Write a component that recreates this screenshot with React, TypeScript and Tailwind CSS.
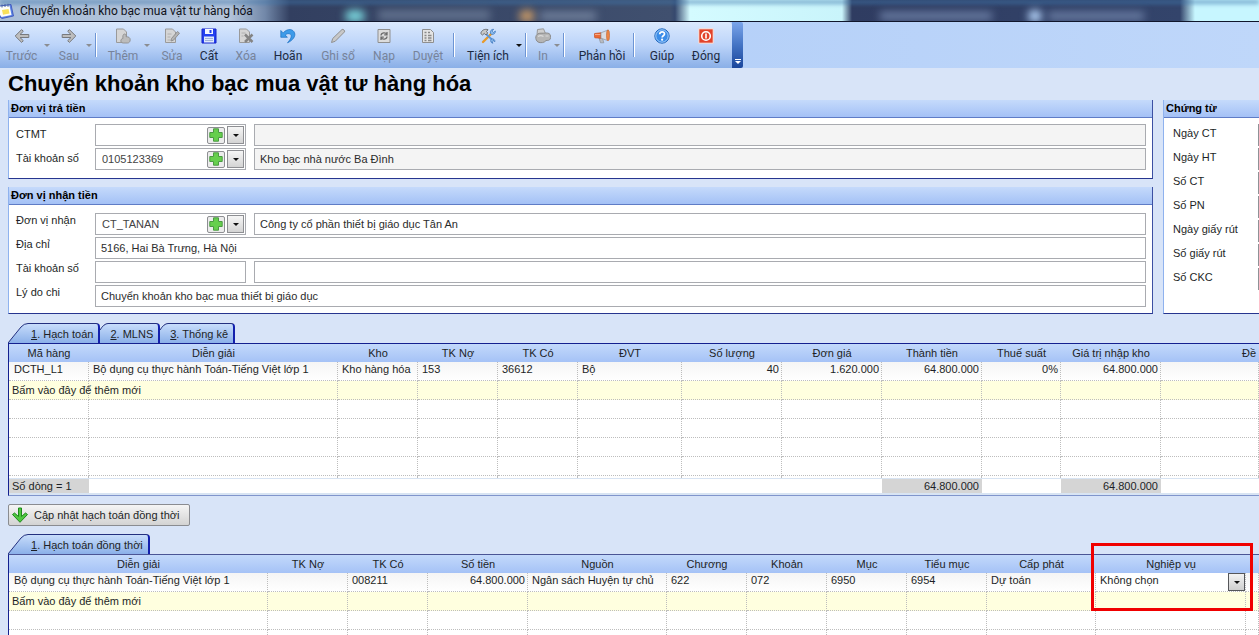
import type { ReactNode } from "react";
import { clsx } from "clsx";

interface Tool {
  label?: string;
  icon?: ReactNode;
  width?: string;
  enabled?: boolean;
  caret?: boolean;
  separator?: boolean;
}

interface Column {
  title: string;
  width: string;
  value?: string;
  align?: "right";
  total?: string;
}

const GRAY = "#8b8d91";

const page = <path d="M1.500 1h7l3 3v10.500h-10z" fill="#d5d5d5" stroke="#9a9a9a" />;

const icons = {
  back: (
    <path d="M7.6 1.6 1.2 8l6.4 6.4 1.7-1.7-3.3-3.2h8.8v-3H6l3.3-3.2z" fill="#bdbdbd" stroke="#77797d" strokeLinejoin="round" />
  ),
  forward: (
    <path d="M8.4 1.6 14.8 8l-6.4 6.4-1.7-1.7L10 9.500H1.200v-3H10L6.700 3.300z" fill="#bdbdbd" stroke="#77797d" strokeLinejoin="round" />
  ),
  add: (
    <>
      {page}
      <path d="M9.500 6c1.800 0 1.800 1.700 1.600 2.700 2.400 0 4.100.8 4.100 3.100 0 2-1.200 3.200-2.700 3.200H8.200c-2 0-2.700-1.500-2.200-3 .4-1.200 1.400-1.500 2-1.500-.5-2 0-4.500 1.500-4.500z" fill="#bcbcbc" stroke="#8f8f8f" strokeWidth=".9" />
    </>
  ),
  edit: (
    <>
      {page}
      <path d="M3.500 6h4M3.500 9h3M3.500 12h3" stroke="#b0b0b0" />
      <path d="m7.500 10.500 6-7 2 1.700-6 7-2.500.8z" fill="#b4b4b4" stroke="#8a8a8a" strokeWidth=".9" />
    </>
  ),
  save: (
    <>
      <path d="M1 1h14v14H1z" fill="#2340f0" stroke="#1722c9" />
      <path d="M4 1h8v5H4z" fill="#f4f7ff" />
      <path d="M8.500 2h2v3h-2z" fill="#2340f0" />
      <path d="M3 8.500h10V14.500H3z" fill="#dfe8fb" />
      <path d="M4 10.500h8M4 12.500h8" stroke="#9fb2d8" />
    </>
  ),
  remove: (
    <>
      {page}
      <path d="M3.500 5h4M3.500 8h2" stroke="#b0b0b0" />
      <path d="m7 6.500 7.500 7.500m0-7.500L7 14" stroke="#848484" strokeWidth="2.500" />
    </>
  ),
  undo: (
    <path d="M.8 2.500v6.800h6.600L5.200 7c1.500-1.300 3.500-1.800 5-.9 1.800 1.200 1.400 4.200-2.700 8.700 5.800-2.700 8.200-6.700 7.100-9.800C13.400 1 7.700-.2 3.200 4.900z" fill="#3d9be9" stroke="#1b6fc2" strokeWidth=".7" />
  ),
  pencil: <path d="m1.500 14.500 1.200-4L12 1.500c1-.8 3.300 1.200 2.500 2.400l-9.300 9.400z" fill="#c8c8c8" stroke="#909090" />,
  reload: (
    <>
      <path d="M2 1.500h12v13H2z" fill="#dcdcdc" stroke="#8f8f8f" />
      <path d="M5 7.500c.2-3 4.500-3.500 5.800-1.200M11 4v2.800H8.200M11 8.500c-.2 3-4.500 3.500-5.800 1.200M5 12V9.200h2.800" fill="none" stroke="#6d6d6d" strokeWidth="1.300" />
    </>
  ),
  approve: (
    <>
      <path d="M2.500 1.500h8l3 3v10h-11z" fill="#e4e4e4" stroke="#8f8f8f" />
      <path d="M4.500 4.500h2m1.500 0h2m-5.500 3h2m1.500 0h3.500m-7 2.500h2m1.500 0h3.500m-7 2.500h2m1.500 0h3.500" stroke="#888" strokeWidth="1.400" />
    </>
  ),
  utility: (
    <>
      <path d="m3 14 8.500-8.500" stroke="#e79a2c" strokeWidth="2.400" strokeLinecap="round" />
      <path d="m6.500 6.500 6.500 6" stroke="#5d97da" strokeWidth="1.800" strokeLinecap="round" />
      <path d="M10.500 5.500c-.8-2.500 1-4.500 3.200-4.200l-1.600 1.800 1.300 1.400 2-1.500c.2 2.200-1.700 4-4 3.200z" fill="#8dbdf0" stroke="#3872b8" strokeWidth=".7" />
      <path d="M.8 5.500C1.500 2.200 4.500.6 8 1.700L6.500 3.500 7.700 5 5.800 7 4.300 5.400 2.500 7z" fill="#c9c9c9" stroke="#55585d" strokeWidth=".8" />
      <path d="M11 11.200c2.400-1 4.200.6 3.900 2.500l-1.700-1.200-1.200 1.200 1 1.500c-1.800 0-2.900-1.800-2-4z" fill="#8dbdf0" stroke="#3872b8" strokeWidth=".7" />
    </>
  ),
  print: (
    <>
      <path d="M2 6.500 2.500 1.500l6-.7L10.500 5.500z" fill="#cfcfcf" stroke="#999" />
      <path d="M.8 9C1 6.500 3.500 5 6 5.200c3 .2 6-.7 8 .3 1.800 1 2 3.500 1.200 5.500-.6 1.500-2.700 1.500-4.200 1.500-1.500 2.300-5.500 2.800-8 1.500C1.300 13 .7 11 .8 9z" fill="#b5b5b5" stroke="#8c8c8c" />
      <path d="M3 8.500c1.500-1 4-1 5.500 0M10.500 8h3" stroke="#dadada" strokeWidth="1.200" />
    </>
  ),
  horn: (
    <>
      <path d="m5 10 1.500 4.800h3.300L8.500 10z" fill="#b9bcc2" stroke="#85888d" strokeWidth=".6" />
      <path d="M.6 5.500Q.2 7.500.8 9.800l6.200.4V4.800z" fill="#ea6a35" stroke="#c84a1a" strokeWidth=".7" />
      <path d="M1 6.500h5.500" stroke="#f7a987" />
      <path d="M7 4.800l6.500-2.600v10.300L7 10.200z" fill="#d9dde4" stroke="#8d929b" strokeWidth=".7" />
      <ellipse cx="14" cy="7.300" rx="1.500" ry="5.500" fill="#f08745" stroke="#b9622f" strokeWidth=".6" />
    </>
  ),
  help: (
    <>
      <circle cx="8" cy="8" r="7.200" fill="#3b8de8" stroke="#2469bd" />
      <circle cx="8" cy="8" r="6.200" fill="none" stroke="#b9dafc" strokeWidth=".8" />
      <path d="M5.700 6.200c0-3.200 4.900-3 4.800-.2-.1 1.700-2.300 1.800-2.400 3.500" fill="none" stroke="#fff" strokeWidth="1.700" />
      <circle cx="8.100" cy="11.700" r="1.100" fill="#fff" />
    </>
  ),
  close: (
    <>
      <path d="M.8.800h14.400v14.400H.8z" fill="#e2432a" stroke="#f9e6e0" />
      <circle cx="8" cy="8" r="4.300" fill="none" stroke="#fff" strokeWidth="1.600" />
      <path d="M8 5.500v5" stroke="#fff" strokeWidth="1.600" />
    </>
  ),
};

const TOOLS: Tool[] = [
  { label: "Trước", icon: icons.back, width: "w-[43px]", caret: true },
  { label: "Sau", icon: icons.forward, width: "w-8", caret: true },
  { separator: true },
  { label: "Thêm", icon: icons.add, width: "w-10", caret: true },
  { label: "Sửa", icon: icons.edit, width: "w-[38px]" },
  { label: "Cất", icon: icons.save, width: "w-9", enabled: true },
  { label: "Xóa", icon: icons.remove, width: "w-[38px]" },
  { label: "Hoãn", icon: icons.undo, width: "w-[46px]", enabled: true },
  { label: "Ghi sổ", icon: icons.pencil, width: "w-[54px]" },
  { label: "Nạp", icon: icons.reload, width: "w-[38px]" },
  { label: "Duyệt", icon: icons.approve, width: "w-[50px]" },
  { separator: true },
  { label: "Tiện ích", icon: icons.utility, width: "w-[54px]", enabled: true, caret: true },
  { separator: true },
  { label: "In", icon: icons.print, width: "w-5", caret: true },
  { separator: true },
  { label: "Phản hồi", icon: icons.horn, width: "w-[62px]", enabled: true },
  { separator: true },
  { label: "Giúp", icon: icons.help, width: "w-[42px]", enabled: true },
  { label: "Đóng", icon: icons.close, width: "w-[46px]", enabled: true },
];

const ITEM_COLUMNS: Column[] = [
  { title: "Mã hàng", width: "w-20", value: "DCTH_L1", total: "Số dòng = 1" },
  { title: "Diễn giải", width: "w-[249px]", value: "Bộ dụng cụ thực hành Toán-Tiếng Việt lớp 1" },
  { title: "Kho", width: "w-20", value: "Kho hàng hóa" },
  { title: "TK Nợ", width: "w-20", value: "153" },
  { title: "TK Có", width: "w-20", value: "36612" },
  { title: "ĐVT", width: "w-[104px]", value: "Bộ" },
  { title: "Số lượng", width: "w-[100px]", value: "40", align: "right" },
  { title: "Đơn giá", width: "w-[100px]", value: "1.620.000", align: "right" },
  { title: "Thành tiền", width: "w-[100px]", value: "64.800.000", align: "right", total: "64.800.000" },
  { title: "Thuế suất", width: "w-[79px]", value: "0%", align: "right" },
  { title: "Giá trị nhập kho", width: "w-[100px]", value: "64.800.000", align: "right", total: "64.800.000" },
  { title: "Đề", width: "w-auto" },
];

const ENTRY_COLUMNS: Column[] = [
  { title: "Diễn giải", width: "w-[259px]", value: "Bộ dụng cụ thực hành Toán-Tiếng Việt lớp 1" },
  { title: "TK Nợ", width: "w-20" },
  { title: "TK Có", width: "w-20", value: "008211" },
  { title: "Số tiền", width: "w-[100px]", value: "64.800.000", align: "right" },
  { title: "Nguồn", width: "w-[139px]", value: "Ngân sách Huyện tự chủ" },
  { title: "Chương", width: "w-20", value: "622" },
  { title: "Khoản", width: "w-20", value: "072" },
  { title: "Mục", width: "w-20", value: "6950" },
  { title: "Tiểu mục", width: "w-20", value: "6954" },
  { title: "Cấp phát", width: "w-[109px]", value: "Dự toán" },
  { title: "Nghiệp vụ", width: "w-[150px]", value: "Không chọn" },
  { title: "", width: "w-auto" },
];

const VOUCHER_FIELDS = ["Ngày CT", "Ngày HT", "Số CT", "Số PN", "Ngày giấy rút", "Số giấy rút", "Số CKC"];

function Caret({ color = "#111" }: { color?: string }) {
  return (
    <svg viewBox="0 0 6 3" className="h-[3px] w-1.5" aria-hidden="true">
      <path d="M0 0h6L3 3z" fill={color} />
    </svg>
  );
}

function TitleBar() {
  return (
    <header className="relative flex h-[22px] shrink-0 items-center overflow-hidden border-b border-[#10162c] bg-[linear-gradient(90deg,#a9bed8_0px,#b4c4da_230px,#7288a9_265px,#323f60_290px,#40506f_670px,#36496e_675px,#d4fbff_690px,#c9f4fb_842px,#2f3c61_852px,#33446b_1180px,#c7f6ff_1195px,#c7f6ff_100%)]">
      <div className="absolute inset-x-0 top-0 h-1 bg-[#3f78ae]/60 blur-[2px]" />
      <div className="absolute top-2.5 left-[345px] h-3 w-5 rounded-full bg-[#79d5dc] blur-xs" />
      <div className="absolute top-2.5 left-[378px] h-2.5 w-28 bg-[#63738f] blur-xs" />
      <div className="absolute top-2.5 left-[519px] h-3 w-4 rounded-full bg-[#c99a66] blur-xs" />
      <div className="absolute top-3 left-[540px] h-2 w-14 bg-[#7585a0] blur-xs" />
      <div className="absolute top-3 left-[880px] h-2 w-28 bg-[#6d80a6] blur-xs" />
      <div className="absolute top-2.5 left-[1028px] h-3 w-3.5 rounded-full bg-[#b9d9ff] blur-xs" />
      <div className="absolute top-3 left-[1048px] h-2 w-24 bg-[#6d80a6] blur-xs" />
      <svg viewBox="0 0 14 16" className="relative h-4 w-3.5" aria-hidden="true">
        <path d="m0 3 11-1.500L13.500 13 2 15.500.0 14z" fill="#5a83e6" stroke="#3a4fb5" strokeWidth=".8" />
        <path d="m0 3.500 9.500-1L11.500 12 1.500 14 0 12z" fill="#fdfdf8" />
        <path d="m2 7 6.500-1 1 4.500L3 11.800z" fill="#f8e05a" />
        <path d="M2 1.500v3M5 1v3M8 .8v3" stroke="#48639c" />
      </svg>
      <h2 className="relative ml-1.5 font-[Roboto,sans-serif] text-xs text-[#10131b]">
        Chuyển khoản kho bạc mua vật tư hàng hóa
      </h2>
    </header>
  );
}

function Toolbar() {
  return (
    <div className="flex h-[46px] shrink-0 bg-linear-to-r from-[#a9c8f6] to-[#bfd7fa] font-[Roboto,sans-serif] text-xs">
      <div className="flex rounded-tr bg-linear-to-b from-[#dbe9fd] via-[#bcd4f9] to-[#8aafe7] pr-[3px]">
        {TOOLS.map((t, i) =>
          t.separator ? (
            <div key={i} className="flex w-2 items-center">
              <div className="h-6 w-0.5 border-l border-[#6d95d4] bg-white" />
            </div>
          ) : (
            <div key={i} className="flex">
              <button
                type="button"
                className={clsx(
                  "flex flex-col items-center gap-0.5 pt-1.5 whitespace-nowrap",
                  t.width,
                  t.enabled ? "text-[#1c2a42]" : "text-[#77839a]"
                )}
              >
                <svg viewBox="0 0 16 16" className="size-4 shrink-0" fill="none" aria-hidden="true">
                  {t.icon}
                </svg>
                <span className="leading-5">{t.label}</span>
              </button>
              {t.caret && (
                <button type="button" aria-label={`${t.label} tùy chọn`} className="flex w-2.5 items-center pl-px">
                  <Caret color={t.enabled ? "#111" : GRAY} />
                </button>
              )}
            </div>
          )
        )}
      </div>
      <button
        type="button"
        aria-label="Thêm nút"
        className="flex w-[11px] flex-col items-center justify-end gap-px rounded-r-xs bg-linear-to-b from-[#7ba5ea] via-[#4474c4] to-[#1a469c] pb-1"
      >
        <span className="h-px w-1.5 bg-white" />
        <Caret color="#fff" />
      </button>
    </div>
  );
}

function Group({ title, open, children }: { title: string; open?: boolean; children: ReactNode }) {
  return (
    <section
      className={clsx(
        "flex flex-col overflow-hidden border-b border-l border-b-[#27358f] border-l-[#8fb2ee] bg-white",
        !open && "border-r border-r-[#3c50a3]"
      )}
    >
      <h3 className="h-[18px] shrink-0 border-b border-[#5f7cc6] bg-linear-to-b from-[#c5dafb] to-[#a4c1f6] pl-0.5 text-[11px] leading-4 font-bold text-black">
        {title}
      </h3>
      {children}
    </section>
  );
}

function Field({ id, label, top, children }: { id: string; label: string; top?: boolean; children: ReactNode }) {
  return (
    <div className={clsx("flex", top ? "items-start" : "items-center")}>
      <label htmlFor={id} className={clsx("w-[79px] shrink-0 leading-[14px]", !top && "pb-0.5")}>
        {label}
      </label>
      <div className="flex min-w-0 flex-1 gap-2">{children}</div>
    </div>
  );
}

function TextBox({ id, label, value, readOnly, narrow }: { id?: string; label?: string; value?: string; readOnly?: boolean; narrow?: boolean }) {
  return (
    <input
      id={id}
      aria-label={label}
      defaultValue={value}
      readOnly={readOnly}
      className={clsx(
        "h-[22px] border border-[#a9abb0] px-[5px] text-[#2b2b2b]",
        narrow ? "w-[151px] shrink-0" : "min-w-0 flex-1",
        readOnly ? "bg-[#f4f4f4]" : "bg-white"
      )}
    />
  );
}

function DropButton({ label }: { label: string }) {
  return (
    <button
      type="button"
      aria-label={label}
      className="flex h-[18px] w-[17px] shrink-0 items-center justify-center border border-[#8e8f93] bg-linear-to-b from-[#f6f6f6] to-[#d4d4d4]"
    >
      <Caret />
    </button>
  );
}

function Combo({ id, value }: { id: string; value?: string }) {
  return (
    <div className="flex h-[22px] w-[151px] shrink-0 items-center gap-0.5 border border-[#a9abb0] bg-white pr-px">
      <input id={id} defaultValue={value} className="h-full min-w-0 flex-1 bg-transparent pl-1.5 text-[#444]" />
      <button
        type="button"
        aria-label="Thêm mới"
        className="flex h-[17px] w-[18px] shrink-0 items-center justify-center rounded-xs border border-[#8e8f93] bg-[#ececec]"
      >
        <svg viewBox="0 0 14 14" className="size-3.5" aria-hidden="true">
          <path d="M4.500.8h5v3.700h3.700v5H9.500v3.700h-5V9.500H.8v-5h3.700z" fill="#66cf4d" stroke="#4a9a42" />
        </svg>
      </button>
      <DropButton label="Mở danh sách" />
    </div>
  );
}

function Tab({ index, label, first, active }: { index: number; label: string; first?: boolean; active?: boolean }) {
  return (
    <button type="button" role="tab" aria-selected={!!active} className="flex h-5">
      <svg viewBox={first ? "0 0 20 20" : "0 0 8 20"} className={clsx("h-5 shrink-0", first ? "w-5" : "w-2")} aria-hidden="true">
        <defs>
          <linearGradient id="tab-fill" x1="0" y1="0" x2="0" y2="1">
            <stop offset="0" stopColor="#c8ddfb" />
            <stop offset="1" stopColor="#8bb0e9" />
          </linearGradient>
        </defs>
        <path d={first ? "M0 20 13 4Q16 .5 20 .5V20z" : "M0 20V7Q4 .5 8 .5V20z"} fill="url(#tab-fill)" />
        <path d={first ? "M0 20 13 4Q16 .5 20 .5" : "M0 7Q4 .5 8 .5"} fill="none" stroke="#23307f" />
      </svg>
      <span
        className={clsx(
          "flex h-5 items-center rounded-tr-sm border-t border-r-2 border-t-[#23307f] border-r-[#1320ad] bg-linear-to-b from-[#c8ddfb] to-[#8bb0e9] pt-0.5 pr-[5px] whitespace-nowrap",
          first ? "pl-[3px]" : "pl-0.5"
        )}
      >
        <span className="underline">{index}</span>. {label}
      </span>
    </button>
  );
}

function Grid({ columns, blanks, totals, last }: { columns: Column[]; blanks: number; totals?: boolean; last?: ReactNode }) {
  const line = "border-r border-b border-dotted border-[#bdbdbd]";
  return (
    <table className="w-full table-fixed border-separate border-spacing-0 bg-white leading-[14px]">
      <thead>
        <tr className="bg-linear-to-b from-[#c3d9fb] to-[#a5c2f6]">
          {columns.map((c, i) => (
            <th
              key={i}
              className={clsx(
                "h-[18px] p-0 font-normal whitespace-nowrap",
                c.width,
                c.title === "Đề" ? "pr-[3px] text-right" : "text-center"
              )}
            >
              {c.title}
            </th>
          ))}
        </tr>
      </thead>
      <tbody>
        <tr className="bg-linear-to-b from-[#f5f5f5] to-white">
          {columns.map((c, i) => (
            <td
              key={i}
              className={clsx(
                line,
                "h-[19px] p-0 align-top whitespace-nowrap",
                c.align === "right" ? "pr-0.5 text-right" : i === 0 ? "pl-[5px]" : "pl-1"
              )}
            >
              {c.title === "Nghiệp vụ" ? last : c.value}
            </td>
          ))}
        </tr>
        <tr className="bg-[#ffffdf]">
          {columns.map((_, i) => (
            <td key={i} className={clsx(line, "h-[19px] p-0 pl-[3px] whitespace-nowrap")}>
              {i === 0 && "Bấm vào đây để thêm mới"}
            </td>
          ))}
        </tr>
        {Array.from({ length: blanks }, (_, r) => (
          <tr key={r}>
            {columns.map((_, i) => (
              <td key={i} className={clsx(line, "h-[19px] p-0")} />
            ))}
          </tr>
        ))}
        {totals && (
          <tr>
            {columns.map((_, i) => (
              <td key={i} className="h-0.5 border-r border-dotted border-[#bdbdbd] p-0" />
            ))}
          </tr>
        )}
      </tbody>
      {totals && (
        <tfoot>
          <tr>
            {columns.map((c, i) => (
              <td
                key={i}
                className={clsx(
                  "h-[17px] border-t border-b-2 border-[#d8e4f3] p-0 whitespace-nowrap",
                  c.total && "bg-[#d5d5d5]",
                  c.align === "right" ? "pr-[3px] text-right" : "pl-[3px]"
                )}
              >
                {c.total}
              </td>
            ))}
          </tr>
        </tfoot>
      )}
    </table>
  );
}

function OperationSelect() {
  return (
    <div className="relative -ml-1 flex h-[18px] items-center bg-white">
      <select
        aria-label="Nghiệp vụ"
        defaultValue="none"
        className="h-full w-full appearance-none bg-transparent pb-1 pl-1 leading-[14px]"
      >
        <option value="none">Không chọn</option>
      </select>
      <span className="pointer-events-none absolute top-0 right-0 flex h-[18px] w-[17px] items-center justify-center border border-[#55565a] bg-linear-to-b from-[#f3f3f3] to-[#cfcfcf]">
        <Caret />
      </span>
      {/* highlight frame around the column header and its first cells */}
      <div className="pointer-events-none absolute -top-[30px] -right-2 -bottom-5 -left-[5px] border-3 border-[#f00000]" />
    </div>
  );
}

export default function App() {
  return (
    <div className="flex h-screen flex-col overflow-hidden bg-[#d8e4f8] font-['Liberation_Sans',Arial,sans-serif] text-[11px] text-[#1d1f26]">
      <TitleBar />
      <Toolbar />
      <main className="flex min-h-0 flex-1 flex-col overflow-hidden pl-2">
        <h1 className="h-8 shrink-0 text-[22px] leading-8 font-bold text-black">Chuyển khoản kho bạc mua vật tư hàng hóa</h1>

        <div className="flex shrink-0 gap-2.5">
          <div className="flex min-w-0 flex-1 flex-col gap-2">
            <Group title="Đơn vị trả tiền">
              <div className="flex flex-col gap-0.5 pt-1.5 pr-1.5 pb-2 pl-[7px]">
                <Field id="ctmt" label="CTMT">
                  <Combo id="ctmt" />
                  <TextBox label="Tên CTMT" readOnly />
                </Field>
                <Field id="payer-account" label="Tài khoản số">
                  <Combo id="payer-account" value="0105123369" />
                  <TextBox label="Tên kho bạc" value="Kho bạc nhà nước Ba Đình" readOnly />
                </Field>
              </div>
            </Group>
            <Group title="Đơn vị nhận tiền">
              <div className="flex flex-col gap-0.5 pt-2 pr-1.5 pb-1.5 pl-[7px]">
                <Field id="receiver" label="Đơn vị nhận" top>
                  <Combo id="receiver" value="CT_TANAN" />
                  <TextBox label="Tên đơn vị nhận" value="Công ty cổ phần thiết bị giáo dục Tân An" />
                </Field>
                <Field id="address" label="Địa chỉ" top>
                  <TextBox id="address" value="5166, Hai Bà Trưng, Hà Nội" />
                </Field>
                <Field id="receiver-account" label="Tài khoản số" top>
                  <TextBox id="receiver-account" narrow />
                  <TextBox label="Tên ngân hàng" />
                </Field>
                <Field id="reason" label="Lý do chi" top>
                  <TextBox id="reason" value="Chuyển khoản kho bạc mua thiết bị giáo dục" />
                </Field>
              </div>
            </Group>
          </div>

          <div className="flex w-24 shrink-0 flex-col *:flex-1">
            <Group title="Chứng từ" open>
              <div className="flex flex-col gap-0.5 pt-1.5 pl-[9px]">
                {VOUCHER_FIELDS.map((label, i) => (
                  <div key={label} className="flex items-center">
                    <label htmlFor={`voucher-${i}`} className="w-[85px] shrink-0 pb-1 whitespace-nowrap">
                      {label}
                    </label>
                    <input id={`voucher-${i}`} className="h-[22px] w-28 shrink-0 border border-[#8f9196] bg-white" />
                  </div>
                ))}
              </div>
            </Group>
          </div>
        </div>

        <div role="tablist" className="mt-[9px] flex shrink-0">
          <Tab index={1} label="Hạch toán" first active />
          <Tab index={2} label="MLNS" />
          <Tab index={3} label="Thống kê" />
        </div>
        <div className="shrink-0 border-t border-b border-l border-[#14208f] border-b-[#8095cc]">
          <Grid columns={ITEM_COLUMNS} blanks={4} totals />
        </div>

        <button
          type="button"
          className="mt-2 flex h-[22px] w-[182px] shrink-0 items-center gap-1.5 rounded-xs border border-[#8a8c91] bg-linear-to-b from-[#f5f5f5] to-[#d3d3d3] pl-[3px] whitespace-nowrap"
        >
          <svg viewBox="0 0 16 16" className="size-4" aria-hidden="true">
            <path d="M6.500 1h3v8.500L13.500 6 15.500 7.500 8 15.300.5 7.500 2.500 6l4 3.500z" fill="#4fc740" stroke="#1d8a1b" strokeLinejoin="round" />
          </svg>
          Cập nhật hạch toán đồng thời
        </button>

        <div role="tablist" className="mt-2 flex shrink-0">
          <Tab index={1} label="Hạch toán đồng thời" first active />
        </div>
        <div className="shrink-0 border-t border-l border-[#4b5595] border-l-[#14208f]">
          <Grid columns={ENTRY_COLUMNS} blanks={3} last={<OperationSelect />} />
        </div>
      </main>
    </div>
  );
}
